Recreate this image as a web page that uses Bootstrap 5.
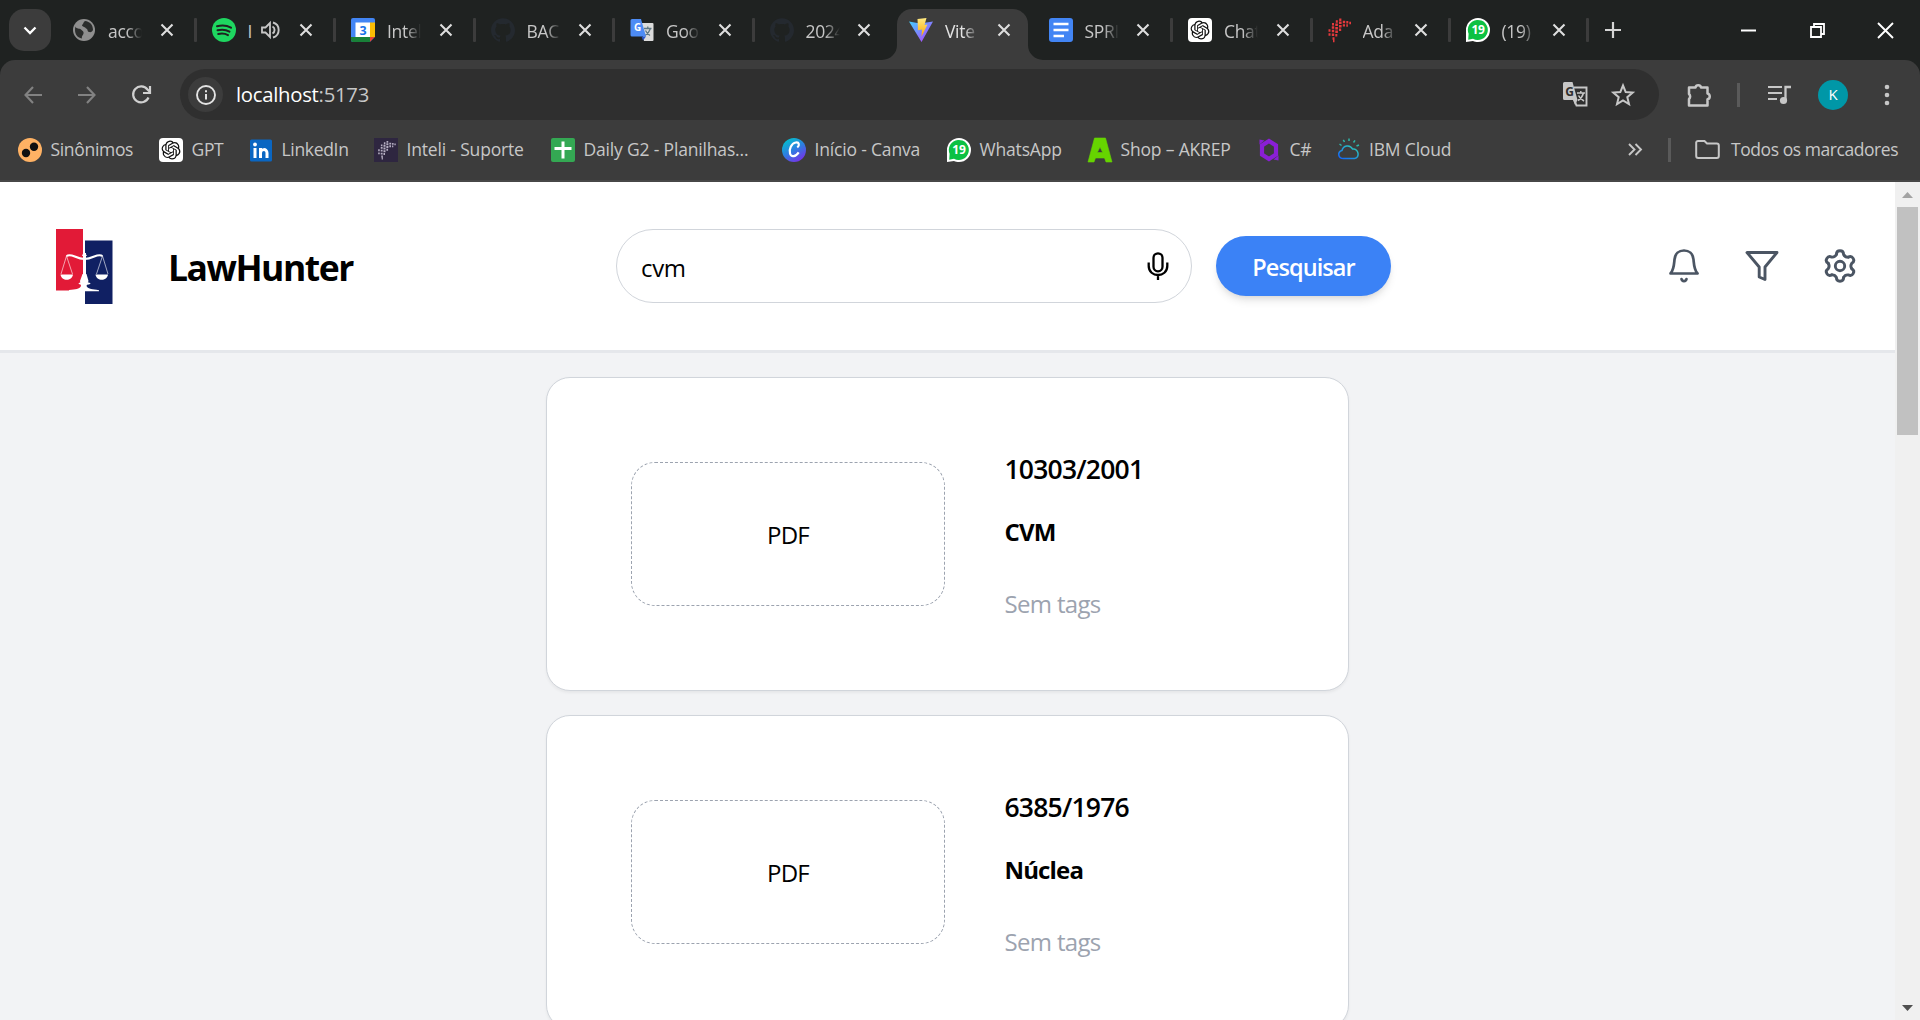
<!DOCTYPE html>
<html lang="pt-BR">
<head>
<meta charset="utf-8">
<title>LawHunter</title>
<link href="https://cdn.jsdelivr.net/npm/bootstrap@5.3.0/dist/css/bootstrap.min.css" rel="stylesheet">
<style>
body{width:1920px;height:1020px;overflow:hidden;font-family:"Open Sans","Noto Sans",sans-serif;background:#f2f3f5;color:#000;letter-spacing:-.02em}
svg{display:block;flex:none;overflow:visible}
.strip{height:60px;background:#1f2221;color:#c7c7c7}
.tabsearch{width:42px;height:42px;margin:9px 0 9px 9px;border-radius:15px;background:#3c3c3c}
.tabs{margin-left:6px}
.tabitem{width:139.5px;height:60px;padding-left:15px;position:relative}
.tabitem .ttl{width:34px;margin-left:12px;font-size:17.5px;line-height:24px;padding-top:2px;white-space:nowrap;overflow:hidden;-webkit-mask-image:linear-gradient(90deg,#000 55%,transparent);mask-image:linear-gradient(90deg,#000 55%,transparent)}
.tabitem .ttl.cut{width:4px;-webkit-mask-image:none;mask-image:none}
.tabitem .xx{margin-left:17.5px}
.tabitem .sep{width:3px;height:24px;background:#3c3c3c;margin-left:20px;border-radius:1px}
.tabitem.on::before{content:"";position:absolute;left:0;top:9px;width:131px;height:51px;background:#3c3c3c;border-radius:15px 15px 0 0}
.foot{position:absolute;bottom:0}
.tabitem.on>*{z-index:1}
.tabitem.on .ttl{color:#e3e3e3}
.tools{height:69px;background:#3c3c3c;border-radius:15px 15px 0 0;color:#c7c7c7;padding:9px 0}
.toolwrap{background:#1f2221}
.omni{margin-left:29px;width:1479px;height:51px;border-radius:26px;background:#2f2f2f;padding-left:8px}
.infobtn{width:35px;height:35px;border-radius:50%;background:#3c3c3c}
.url{font-size:20.3px;margin-left:13px;color:#c7c7c7;letter-spacing:-.013em}
.url b{font-weight:400;color:#fff}
.vbar{width:3px;height:24px;background:#5a5a5a}
.avatar{width:30px;height:30px;border-radius:50%;background:#0097a7;color:#fff;font-size:15px}
.marks{height:53px;background:#3c3c3c;border-bottom:2px solid #474747;padding:0 0 10px 18px;color:#c7c7c7;font-size:17.5px}
.bm{gap:8.5px;white-space:nowrap}
.bm:nth-child(n+4){letter-spacing:-.01em}
.bm:nth-child(1){width:141px}.bm:nth-child(2){width:90px}.bm:nth-child(3){width:125px}.bm:nth-child(4){width:177px}.bm:nth-child(5){width:231px}.bm:nth-child(6){width:165px}.bm:nth-child(7){width:141px}.bm:nth-child(8){width:169px}.bm:nth-child(9){width:80px}.bm:nth-child(10){width:291px}
.allbm{letter-spacing:-.025em}
.view{height:838px}
.top{height:171px;background:#fff;border-bottom:3px solid #e5e7eb;padding:0 0 0 56px}
.brand{font-size:35.5px;font-weight:700;margin-left:55px;width:448px;letter-spacing:-.042em;padding-top:4px}
.search{width:576px;height:74px;border:1.5px solid #d1d5db;border-radius:37px;padding:0 22px 0 24px;font-size:24px}
.search span{padding-top:3px}
.go{width:175px;height:60px;margin-left:24px;border-radius:30px;background:#3b82f6;color:#fff;font-size:23.5px;font-weight:600;letter-spacing:-.04em;padding:3px 0 0;border:0;box-shadow:0 6px 9px -1.5px rgba(0,0,0,.1),0 3px 6px -3px rgba(0,0,0,.1)}
.acts{margin-left:275px;gap:42px}
.list{padding-top:24px;gap:24px}
.law{width:803px;height:314px;flex:none;background:#fff;border:1.5px solid #d1d5db;border-radius:24px;padding:0 84px;box-shadow:0 1.5px 3px rgba(0,0,0,.05)}
.pdf{width:314px;height:144px;border:1.5px dashed #9ca3af;border-radius:24px;font-size:24px;padding-top:1px;letter-spacing:-.03em}
.info{margin-left:59.5px;padding-top:1px}
.num{font-size:26.5px;font-weight:600;line-height:42px;letter-spacing:-.03em}
.org{font-size:24px;font-weight:700;line-height:36px;margin-top:24px;letter-spacing:-.035em}
.tags{font-size:24px;color:#9ca3af;line-height:36px;margin-top:36px;letter-spacing:-.028em}
.bar{width:25px;background:#f0f0f0}
.thumb{width:21px;height:228px;background:#c1c1c1}
</style>
</head>
<body class="d-flex flex-column">
<svg width="0" height="0" style="position:absolute">
<defs>
<symbol id="x" viewBox="0 0 14 14"><path d="M1.5 1.5l11 11m0-11l-11 11" stroke="#dedede" stroke-width="2.1" fill="none"/></symbol>
<symbol id="gpt" viewBox="0 0 24 24"><rect width="24" height="24" rx="4" fill="#fff"/><path transform="translate(2.6 2.6) scale(.785)" fill="#111" d="M22.2819 9.8211a5.9847 5.9847 0 0 0-.5157-4.9108 6.0462 6.0462 0 0 0-6.5098-2.9A6.0651 6.0651 0 0 0 4.9807 4.1818a5.9847 5.9847 0 0 0-3.9977 2.9 6.0462 6.0462 0 0 0 .7427 7.0966 5.98 5.98 0 0 0 .511 4.9107 6.051 6.051 0 0 0 6.5146 2.9001A5.9847 5.9847 0 0 0 13.2599 24a6.0557 6.0557 0 0 0 5.7718-4.2058 5.9894 5.9894 0 0 0 3.9977-2.9001 6.0557 6.0557 0 0 0-.7475-7.0729zm-9.022 12.6081a4.4755 4.4755 0 0 1-2.8764-1.0408l.1419-.0804 4.7783-2.7582a.7948.7948 0 0 0 .3927-.6813v-6.7369l2.02 1.1686a.071.071 0 0 1 .038.052v5.5826a4.504 4.504 0 0 1-4.4945 4.4944zm-9.6607-4.1254a4.4708 4.4708 0 0 1-.5346-3.0137l.142.0852 4.783 2.7582a.7712.7712 0 0 0 .7806 0l5.8428-3.3685v2.3324a.0804.0804 0 0 1-.0332.0615L9.74 19.9502a4.4992 4.4992 0 0 1-6.1408-1.6464zM2.3408 7.8956a4.485 4.485 0 0 1 2.3655-1.9728V11.6a.7664.7664 0 0 0 .3879.6765l5.8144 3.3543-2.0201 1.1685a.0757.0757 0 0 1-.071 0l-4.8303-2.7865A4.504 4.504 0 0 1 2.3408 7.872zm16.5963 3.8558L13.1038 8.364 15.1192 7.2a.0757.0757 0 0 1 .071 0l4.8303 2.7913a4.4944 4.4944 0 0 1-.6765 8.1042v-5.6772a.79.79 0 0 0-.407-.667zm2.0107-3.0231l-.142-.0852-4.7735-2.7818a.7759.7759 0 0 0-.7854 0L9.409 9.2297V6.8974a.0662.0662 0 0 1 .0284-.0615l4.8303-2.7866a4.4992 4.4992 0 0 1 6.6802 4.66zM8.3065 12.863l-2.02-1.1638a.0804.0804 0 0 1-.038-.0567V6.0742a4.4992 4.4992 0 0 1 7.3757-3.4537l-.142.0805L8.704 5.459a.7948.7948 0 0 0-.3927.6813zm1.0976-2.3654l2.602-1.4998 2.6069 1.4998v2.9994l-2.5974 1.4997-2.6067-1.4997Z"/></symbol>
<symbol id="gh" viewBox="0 0 24 24"><path fill="#24292f" d="M12 .297c-6.63 0-12 5.373-12 12 0 5.303 3.438 9.8 8.205 11.385.6.113.82-.258.82-.577 0-.285-.01-1.04-.015-2.04-3.338.724-4.042-1.61-4.042-1.61C4.422 18.07 3.633 17.7 3.633 17.7c-1.087-.744.084-.729.084-.729 1.205.084 1.838 1.236 1.838 1.236 1.07 1.835 2.809 1.305 3.495.998.108-.776.417-1.305.76-1.605-2.665-.3-5.466-1.332-5.466-5.93 0-1.31.465-2.38 1.235-3.22-.135-.303-.54-1.523.105-3.176 0 0 1.005-.322 3.3 1.23.96-.267 1.98-.399 3-.405 1.02.006 2.04.138 3 .405 2.28-1.552 3.285-1.23 3.285-1.23.645 1.653.24 2.873.12 3.176.765.84 1.23 1.91 1.23 3.22 0 4.61-2.805 5.625-5.475 5.92.42.36.81 1.096.81 2.22 0 1.606-.015 2.896-.015 3.286 0 .315.21.69.825.57C20.565 22.092 24 17.592 24 12.297c0-6.627-5.373-12-12-12"/></symbol>
<symbol id="wa" viewBox="0 0 24 24"><path d="M0 24V12A12 12 0 1 1 12 24c-2 0-3.500-.4-5-1z" fill="#fff"/><path d="M2.200 21.800l.4-6A10 10 0 1 1 7 20.700z" fill="#0cc143"/><text x="12" y="16.200" font-family="Open Sans" font-weight="700" font-size="12" fill="#fff" text-anchor="middle">19</text></symbol>
<g id="mesh"><path d="M1.500 12.500h2M1.500 16.500h2M4.800 9.500h2.400M4.800 13h2.400M4.800 16.800h2.400M8.300 6.800h2.600M8.300 10.300h2.600M8.300 13.800h2.600M8.300 17.300h2M12 4.800h2.600M12 8.300h2.600M12 11.800h2.200M15.800 4h2.400M15.800 7.400h2.200M19.300 4.300h2M22.300 5h1.700M5.500 20.500h2M19.300 7.500h1.600M12.200 1.800h2.200M8.800 3.500h2M6 23h1.500M5 6.200h2" stroke-width="2.400"/></g>
<linearGradient id="v1" x1="0" y1="0" x2="1" y2="1"><stop stop-color="#41d1ff"/><stop offset="1" stop-color="#bd34fe"/></linearGradient>
<linearGradient id="v2" x1="0" y1="0" x2="0" y2="1"><stop stop-color="#ffea83"/><stop offset="1" stop-color="#ffa800"/></linearGradient>
<linearGradient id="cv" x1=".2" y1="0" x2=".8" y2="1"><stop stop-color="#00c4cc"/><stop offset=".5" stop-color="#2f7de1"/><stop offset="1" stop-color="#7d2ae8"/></linearGradient>
<linearGradient id="ib" x1="0" y1="1" x2="1" y2="0"><stop stop-color="#1261fe"/><stop offset="1" stop-color="#30d5b0"/></linearGradient>
</defs></svg>

<header class="strip d-flex align-items-center">
 <div class="tabsearch d-flex align-items-center justify-content-center"><svg width="14" height="9"><path d="M1.5 1.5L7 7l5.500-5.500" fill="none" stroke="#fff" stroke-width="2.3"/></svg></div>
 <nav class="tabs d-flex">
  <div class="tabitem d-flex align-items-center"><svg width="24" height="24" viewBox="0 0 24 24"><circle cx="12" cy="12" r="11" fill="#8f8f8f"/><path d="M3.500 8.500c1 3 4 1.500 5.500 3s3 2 2.500 4-2 2-1.500 5C5 20 1.700 15 3.500 8.500zM13 3c-2 1.500-1.500 3-3 4 0 2 3 1.500 4 3.500 2 0 1 3 3 3.500s3.500-.5 4-2C21 7 18 3.500 13 3z" fill="#2b2d2c"/></svg><span class="ttl">acco</span><svg class="xx" width="14" height="14"><use href="#x"/></svg><i class="sep"></i></div>
  <div class="tabitem d-flex align-items-center"><svg width="24" height="24" viewBox="0 0 24 24"><circle cx="12" cy="12" r="12" fill="#1ed760"/><path d="M5 8.300c4.500-1.300 10-.9 14 1.400M5.500 12.300c4-1.100 8.500-.7 12 1.300M6.200 16c3.500-.9 7-.5 9.800 1.100" fill="none" stroke="#1f2221" stroke-width="2" stroke-linecap="round"/></svg><span class="ttl cut">I</span><svg width="18" height="18" viewBox="0 0 18 18" style="margin-left:9px"><path d="M1 6.500h3.500L9 2v14l-4.500-4.500H1z" fill="none" stroke="#c7c7c7" stroke-width="1.800"/><path d="M11.500 5.500a4 4 0 0 1 0 7M12 1.500a7.800 7.800 0 0 1 0 15" fill="none" stroke="#c7c7c7" stroke-width="1.900"/></svg><svg class="xx" style="margin-left:20.500px" width="14" height="14"><use href="#x"/></svg><i class="sep"></i></div>
  <div class="tabitem d-flex align-items-center"><svg width="24" height="24" viewBox="0 0 24 24"><rect width="24" height="24" rx="2" fill="#4285f4"/><path d="M19 4.500h5V19h-5z" fill="#fbbc04"/><path d="M0 19h19v5H2a2 2 0 0 1-2-2z" fill="#188038"/><path d="M19 19h5l-5 5z" fill="#ea4335"/><path d="M24 19v5h-5z" fill="#1f2221"/><path d="M4.500 4.500H19V19H4.500z" fill="#fff"/><text x="12" y="16.500" font-family="Open Sans" font-weight="700" font-size="12.500" fill="#1a73e8" text-anchor="middle">3</text></svg><span class="ttl">Intel</span><svg class="xx" width="14" height="14"><use href="#x"/></svg><i class="sep"></i></div>
  <div class="tabitem d-flex align-items-center"><svg width="24" height="24"><use href="#gh"/></svg><span class="ttl">BAC</span><svg class="xx" width="14" height="14"><use href="#x"/></svg><i class="sep"></i></div>
  <div class="tabitem d-flex align-items-center"><svg width="24" height="24" viewBox="0 0 24 24"><path d="M10 5h12.500a1 1 0 0 1 1 1v16a1 1 0 0 1-1 1H14z" fill="#dcdcdc"/><path d="M14 10.500h7.500M17.800 8.500v2M20.500 10.500c-1 3-3 5.500-5.500 7M15.500 12.500c1 2 2.500 4 4.500 5" stroke="#5f7884" stroke-width="1.300" fill="none"/><path d="M2 1h9l5 17.500H2a1.500 1.500 0 0 1-1.500-1.500V2.500A1.500 1.500 0 0 1 2 1z" fill="#4d8cf5"/><path d="M11.500 18.500H16l-3 4z" fill="#2a56c6"/><text x="7.500" y="13" font-family="Open Sans" font-weight="700" font-size="10" fill="#fff" text-anchor="middle">G</text></svg><span class="ttl">Goo</span><svg class="xx" width="14" height="14"><use href="#x"/></svg><i class="sep"></i></div>
  <div class="tabitem d-flex align-items-center"><svg width="24" height="24"><use href="#gh"/></svg><span class="ttl">2024</span><svg class="xx" width="14" height="14"><use href="#x"/></svg></div>
  <div class="tabitem on d-flex align-items-center" style="padding-left:12px;margin-left:3px;width:136.500px"><svg class="foot" style="left:-15px" width="161" height="15"><path d="M0 15A15 15 0 0 0 15 0V15zM161 15A15 15 0 0 1 146 0V15z" fill="#3c3c3c"/></svg><svg width="24" height="24" viewBox="0 0 24 24"><path d="M0 3.500l11 2L24 3.500 12.500 24z" fill="url(#v1)"/><path d="M8.500 1L17.500 0l-2 7 3-.5-6 12 .5-7-4 .8z" fill="url(#v2)"/></svg><span class="ttl">Vite</span><svg class="xx" width="14" height="14"><use href="#x"/></svg></div>
  <div class="tabitem d-flex align-items-center"><svg width="24" height="24" viewBox="0 0 24 24"><rect width="24" height="24" rx="3" fill="#4285f4"/><path d="M4.500 6h15M4.500 12h15M4.500 18h10.500" stroke="#fff" stroke-width="2.700"/></svg><span class="ttl">SPRI</span><svg class="xx" width="14" height="14"><use href="#x"/></svg><i class="sep"></i></div>
  <div class="tabitem d-flex align-items-center"><svg width="24" height="24"><use href="#gpt"/></svg><span class="ttl">Chat</span><svg class="xx" width="14" height="14"><use href="#x"/></svg><i class="sep"></i></div>
  <div class="tabitem d-flex align-items-center" style="padding-left:14px"><svg width="24" height="24" viewBox="0 0 24 24" stroke="#e5393c"><use href="#mesh"/></svg><span class="ttl">Ada</span><svg class="xx" width="14" height="14"><use href="#x"/></svg><i class="sep"></i></div>
  <div class="tabitem d-flex align-items-center" style="padding-left:13.500px"><svg width="24" height="24"><use href="#wa"/></svg><span class="ttl">(19)</span><svg class="xx" style="margin-left:16.500px" width="14" height="14"><use href="#x"/></svg><i class="sep"></i></div>
 </nav>
 <svg width="16" height="16" style="margin-left:13px"><path d="M8 0v16M0 8h16" stroke="#d5d5d5" stroke-width="2.200"/></svg>
 <div class="ms-auto d-flex align-items-center" style="gap:53.500px;padding-right:27px"><svg width="15" height="15"><path d="M0 7.500h15" stroke="#fff" stroke-width="2"/></svg><svg width="15" height="15"><path d="M1 4h10v10H1zM4 4V1h10v10h-3" fill="none" stroke="#fff" stroke-width="1.800"/></svg><svg width="15" height="15"><path d="M0 0l15 15M15 0L0 15" stroke="#fff" stroke-width="1.900"/></svg></div>
</header>

<div class="toolwrap"><div class="tools d-flex align-items-center">
 <svg width="18" height="18" style="margin-left:24px"><path d="M18 9H2M9 1L1.500 9 9 17" fill="none" stroke="#828282" stroke-width="2.100"/></svg>
 <svg width="18" height="18" style="margin-left:36px"><path d="M0 9h16M9 1l7.500 8L9 17" fill="none" stroke="#828282" stroke-width="2.100"/></svg>
 <svg width="19" height="19" style="margin-left:36px"><path d="M16.500 12.500A8 8 0 1 1 15.500 4.500L18 7M18 1v7h-7" fill="none" stroke="#d0d0d0" stroke-width="2.200"/></svg>
 <div class="omni d-flex align-items-center">
  <div class="infobtn d-flex align-items-center justify-content-center"><svg width="20" height="20"><circle cx="10" cy="10" r="9" fill="none" stroke="#e3e3e3" stroke-width="1.900"/><path d="M10 9v5.500M10 5.200v2" stroke="#e3e3e3" stroke-width="2"/></svg></div>
  <span class="url"><b>localhost</b>:5173</span>
  <svg class="ms-auto" width="25" height="25" viewBox="0 0 25 25"><path d="M11 5.500h12.500v18H13.500L11 17" fill="none" stroke="#c7c7c7" stroke-width="1.900"/><path d="M14 11h8M17.800 9v2M20.500 11c-1 3.500-3 6-5.500 7.500M15.500 13.500c1 2 3 4 5.500 5.500" stroke="#c7c7c7" stroke-width="1.500" fill="none"/><path d="M1.500 0h8l5 18H1.500A1.500 1.500 0 0 1 0 16.500v-15A1.500 1.500 0 0 1 1.500 0zM10 18h4.500L12 23z" fill="#c7c7c7"/><text x="6.500" y="13.500" font-family="Open Sans" font-weight="700" font-size="12" fill="#2f2f2f" text-anchor="middle">G</text></svg>
  <svg width="24" height="24" viewBox="0 0 24 24" style="margin:0 24px 0 23px"><path d="M12 2.500l2.700 6.600 7 .5-5.400 4.600 1.700 6.900-6-3.700-6 3.700 1.700-6.900L2.300 9.600l7-.5z" fill="none" stroke="#c7c7c7" stroke-width="2"/></svg>
 </div>
 <svg width="26" height="26" viewBox="0 0 26 26" style="margin-left:28px"><path d="M2 5.500h6.500a2.800 2.800 0 0 1 5.500 0h6.500v6a3 3 0 0 1 0 5.800v6.200H2V17a3.300 3.300 0 0 0 0-5z" fill="none" stroke="#c7c7c7" stroke-width="2.500" stroke-linejoin="round"/></svg>
 <i class="vbar" style="margin-left:24px"></i>
 <svg width="23" height="20" style="margin-left:28px"><path d="M0 2h14M0 8h14M0 14h9" stroke="#c7c7c7" stroke-width="2.200"/><path d="M17.500 15V2H23" stroke="#c7c7c7" stroke-width="2.300" fill="none"/><circle cx="15.500" cy="15.500" r="3.600" fill="#c7c7c7"/></svg>
 <div class="avatar d-flex align-items-center justify-content-center" style="margin-left:27px">K</div>
 <svg width="6" height="24" style="margin-left:36px"><g fill="#c7c7c7"><circle cx="3" cy="4" r="2.300"/><circle cx="3" cy="12" r="2.300"/><circle cx="3" cy="20" r="2.300"/></g></svg>
</div></div>

<div class="marks d-flex align-items-center">
 <div class="bm d-flex align-items-center"><svg width="24" height="24"><circle cx="12" cy="12" r="12" fill="#ffb264"/><circle cx="8" cy="15" r="4.200" fill="#111"/><circle cx="16" cy="8.800" r="4.200" fill="#111"/></svg>Sinônimos</div>
 <div class="bm d-flex align-items-center"><svg width="24" height="24"><use href="#gpt"/></svg>GPT</div>
 <div class="bm d-flex align-items-center"><svg width="24" height="24"><rect x="1" y="1.500" width="22" height="22" rx="1.500" fill="#0a66c2"/><path d="M6 10v10M11.500 20V10M11.500 15c0-4 6.500-5 6.500 0v5" fill="none" stroke="#fff" stroke-width="3"/><circle cx="6" cy="6.500" r="1.900" fill="#fff"/></svg>LinkedIn</div>
 <div class="bm d-flex align-items-center"><svg width="24" height="24" viewBox="0 0 24 24"><rect width="24" height="24" fill="#2e2640"/><g stroke="#b5aec2" transform="translate(3 2.500) scale(.78)"><use href="#mesh"/></g></svg>Inteli - Suporte</div>
 <div class="bm d-flex align-items-center"><svg width="24" height="24"><rect width="24" height="24" rx="2" fill="#34a853"/><path d="M12 3.500v17M3.500 10.500h17" stroke="#fff" stroke-width="3"/></svg>Daily G2 - Planilhas...</div>
 <div class="bm d-flex align-items-center"><svg width="24" height="24"><circle cx="12" cy="12" r="12" fill="url(#cv)"/><path d="M15.300 9.500c2.500-2 2-5.500-1.500-5-4.500.7-7 7-5.800 11 1.200 4 5.500 3.500 8.700-1.200" fill="none" stroke="#fff" stroke-width="2.200"/></svg>Início - Canva</div>
 <div class="bm d-flex align-items-center"><svg width="24" height="24"><use href="#wa"/></svg>WhatsApp</div>
 <div class="bm d-flex align-items-center"><svg width="24" height="24"><path d="M6.500 0h11L24 24h-6l-1.500-4h-9L6 24H0zM12 9L9.300 14.500h5.400z" fill="#66d400" stroke="#66d400" stroke-width=".6" fill-rule="evenodd"/></svg>Shop – AKREP</div>
 <div class="bm d-flex align-items-center"><svg width="24" height="24"><path d="M12 3l7 4.500v9L12 21l-7-4.500v-9z" fill="none" stroke="#8a1fd6" stroke-width="4.200"/><path d="M2.500 1.500l5 1-5 4zM21.500 22.500l-5-1 5-4z" fill="#8a1fd6"/></svg>C#</div>
 <div class="bm d-flex align-items-center" style="gap:8px"><svg width="24" height="24"><path d="M6.500 20.500C1 20.500 0 14 5 12.500 6 7.500 13 6 15.500 11c6-1 8 9 2 9.500z" fill="none" stroke="url(#ib)" stroke-width="1.500"/><path d="M4.500 7.500l-2-1.500M7.500 4L6.300 1.800M12 3V.5M16.500 4.500L18 2.300M19.500 8l2.500-1" stroke="#2cb6a8" stroke-width="1.500"/></svg>IBM Cloud</div>
 <svg width="14" height="13"><path d="M1 1l5.500 5.500L1 12M7.500 1L13 6.500 7.500 12" fill="none" stroke="#c7c7c7" stroke-width="1.900"/></svg>
 <i class="vbar" style="margin-left:26px"></i>
 <svg width="25" height="19" style="margin:0 11px 0 24px"><path d="M1.200 3.500V16a2 2 0 0 0 2 2h18.600a2 2 0 0 0 2-2V5.500a2 2 0 0 0-2-2H12L9.500 1H3.200a2 2 0 0 0-2 2.500z" fill="none" stroke="#c7c7c7" stroke-width="2"/></svg>
 <span class="allbm text-nowrap">Todos os marcadores</span>
</div>

<div class="view d-flex overflow-hidden">
 <main class="flex-grow-1 d-flex flex-column">
  <div class="top d-flex align-items-center flex-shrink-0">
   <svg width="57" height="75"><path d="M0 0h27v61.500H0z" fill="#e21a37"/><path d="M29 11.500h27.500V75H29z" fill="#102063"/><g stroke="#fff" fill="none"><path d="M10.500 27c5-3.500 9 3 18 3s13-6.500 18-3" stroke-width="2"/><path d="M10.500 27L5 45M10.500 27l6 18M46.500 27l-6 18M46.500 27L52 45" stroke-width=".6"/><path d="M28.500 24v32" stroke-width="3"/></g><path d="M4.500 45.500h12.500c-1 7-11.500 7-12.500 0zM39.500 45.500H52c-1 7-11.500 7-12.500 0zM28 22l3 5h-5zM26.500 45h4l2 7-2 5c2 3.500 6 3 12.500 4.200v1H13v-1.200c7-.8 10-.5 12-4l-1-5z" fill="#fff"/><ellipse cx="28.500" cy="54.500" rx="6" ry="1.500" fill="#fff"/></svg>
   <div class="brand">LawHunter</div>
   <div class="search d-flex align-items-center justify-content-between"><span>cvm</span><svg width="22" height="28"><rect x="6.500" y="1.300" width="9" height="18" rx="4.500" fill="none" stroke="#000" stroke-width="2.300"/><path d="M1.700 10.500v3.500c0 12 18.600 12 18.600 0v-3.500M11 23v5" fill="none" stroke="#000" stroke-width="2.300"/></svg></div>
   <button class="go">Pesquisar</button>
   <div class="acts d-flex">
    <svg width="36" height="36" fill="none" stroke="#4b5563" stroke-width="2.700" stroke-linejoin="round" stroke-linecap="round"><path d="M4.500 25.500c3.500-4 3.500-9 4-14C9 5.500 13 2.500 18 2.500s9 3 9.500 9c.5 5 .5 10 4 14z"/><path d="M15.500 31c.5 2.700 4.500 2.700 5 0"/></svg>
    <svg width="36" height="36" fill="none" stroke="#4b5563" stroke-width="2.900" stroke-linejoin="round"><path d="M3 4.500h30L21 19v12.500L15.200 29V19z"/></svg>
    <svg width="36" height="36" viewBox="-18 -18 36 36" fill="none" stroke="#4b5563" stroke-width="2.900" stroke-linecap="round"><defs><path id="lobe" d="M-3.600-11.500C-3.600-13-2.800-15.200 0-15.200S3.600-13 3.600-11.500Q5-8.600 8.160-8.870"/></defs><use href="#lobe"/><use href="#lobe" transform="rotate(60)"/><use href="#lobe" transform="rotate(120)"/><use href="#lobe" transform="rotate(180)"/><use href="#lobe" transform="rotate(240)"/><use href="#lobe" transform="rotate(300)"/><circle r="4.700"/></svg>
   </div>
  </div>
  <div class="list d-flex flex-column align-items-center flex-grow-1">
   <article class="law d-flex align-items-center">
    <div class="pdf d-flex align-items-center justify-content-center">PDF</div>
    <div class="info"><div class="num">10303/2001</div><div class="org">CVM</div><div class="tags">Sem tags</div></div>
   </article>
   <article class="law d-flex align-items-center">
    <div class="pdf d-flex align-items-center justify-content-center">PDF</div>
    <div class="info"><div class="num">6385/1976</div><div class="org">Núclea</div><div class="tags">Sem tags</div></div>
   </article>
  </div>
 </main>
 <aside class="bar d-flex flex-column align-items-center">
  <svg width="11" height="6" style="margin:10px 0 9px"><path d="M0 6l5.500-6L11 6z" fill="#a3a3a3"/></svg>
  <div class="thumb"></div>
  <svg class="mt-auto" width="11" height="6" style="margin-bottom:9px"><path d="M0 0h11L5.500 6z" fill="#505050"/></svg>
 </aside>
</div>
<script src="https://cdn.jsdelivr.net/npm/bootstrap@5.3.0/dist/js/bootstrap.bundle.min.js"></script>
</body>
</html>
